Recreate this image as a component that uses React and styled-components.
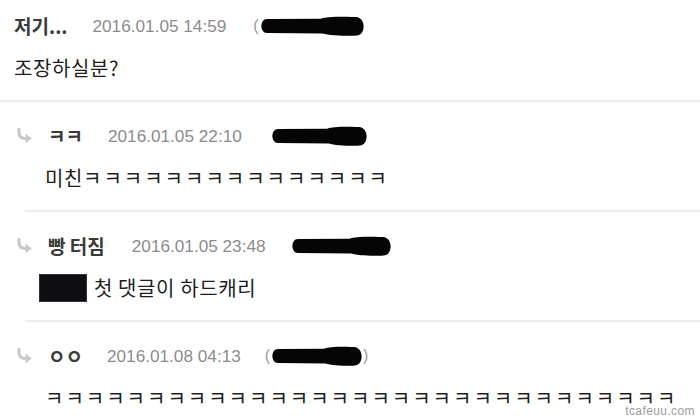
import React from "react";
import styled, { createGlobalStyle } from "styled-components";

const Global = createGlobalStyle`
  html, body { margin: 0; padding: 0; background: #fff; }
  body { width: 700px; height: 419px; overflow: hidden; }
  #root { width: 700px; height: 419px; }
`;

const Page = styled.div`
  position: relative;
  width: 700px;
  height: 419px;
  background: #fff;
  font-family: "Noto Sans CJK KR", "Noto Sans", sans-serif;
  color: #222;
`;

const Block = styled.section`
  display: flex;
  flex-direction: column;
  gap: 18px;
  padding: ${(p) => (p.$reply ? "22px 0 20px" : "14px 0 20px")};
`;

const Divider = styled.hr`
  margin: 0 0 0 ${(p) => p.$indent}px;
  border: 0;
  height: 2px;
  background: #ededed;
`;

const Header = styled.div`
  display: flex;
  align-items: center;
  height: 24px;
  padding-left: ${(p) => (p.$reply ? 16 : 14)}px;
`;

const ReplyIcon = styled.svg`
  width: 17px;
  height: 16px;
  margin-right: 15px;
  flex: none;
`;

const Name = styled.span`
  font-size: 19px;
  font-weight: 700;
  color: #3a3a3a;
  white-space: nowrap;
  position: relative;
  top: -1px;
`;

const DateText = styled.span`
  margin-left: ${(p) => p.$gap}px;
  font-family: "Liberation Sans", Arial, sans-serif;
  font-size: 17.2px;
  color: #8c8c8c;
  white-space: nowrap;
`;

const Redact = styled.span`
  display: inline-flex;
  align-items: center;
  margin-left: ${(p) => p.$gap}px;
  font-family: "Liberation Sans", Arial, sans-serif;
  font-size: 16px;
  color: #9a9a9a;
`;

const Paren = styled.span`
  line-height: 1;
`;

const Content = styled.div`
  display: flex;
  align-items: center;
  gap: 8px;
  height: 24px;
  padding-left: ${(p) => p.$indent}px;
  font-size: 20px;
  line-height: 24px;
  letter-spacing: 0.6px;
  color: #1e1e1e;
  white-space: nowrap;
`;

const Laugh = styled.span`
  letter-spacing: 2px;
`;

const Masked = styled.span`
  display: inline-block;
  width: 46px;
  height: 26px;
  flex: none;
  background: #0e0e10;
  box-shadow: 0 0 0 1px #2b3340;
`;

const Watermark = styled.div`
  position: absolute;
  right: 5px;
  bottom: 1px;
  font-family: "Liberation Sans", Arial, sans-serif;
  font-size: 12px;
  line-height: 14px;
  letter-spacing: 0.4px;
  color: #9c9c9c;
`;

const Arrow = () => (
  <ReplyIcon viewBox="0 0 17 16">
    <path d="M3 1.5 C2.5 8 4.5 10.5 9 10.5 L11 10.5" fill="none" stroke="#cacaca" strokeWidth="3.2" strokeLinecap="round" />
    <path d="M9.5 5.5 L15.8 10.5 L9.5 15.5 Z" fill="#cacaca" />
  </ReplyIcon>
);

const Blob = ({ w, h = 20 }) => (
  <svg width={w} height={h} viewBox={`0 0 ${w} ${h}`} style={{ display: "block" }}>
    <path
      d={`M8 3 C0.5 3 0.5 17 8 17 L${w * 0.6} 17.5 C${w * 0.66} 20 ${w - 10} 20 ${w - 8} 19.5 C${w + 1} 18.5 ${w + 1} 1.5 ${w - 9} 1 C${w * 0.66} 0 ${w * 0.62} 1.5 ${w * 0.58} 2.8 Z`}
      fill="#050505"
    />
  </svg>
);

const Redaction = ({ gap, w, open, close }) => (
  <Redact $gap={gap}>
    {open && <Paren>(</Paren>}
    <Blob w={w} />
    {close && <Paren>)</Paren>}
  </Redact>
);

const comments = [
  {
    reply: false,
    name: "저기...",
    date: "2016.01.05 14:59",
    dateGap: 25,
    red: { gap: 27, w: 106, open: true },
    body: ["조장하실분?", ""],
  },
  {
    reply: true,
    name: "ㅋㅋ",
    date: "2016.01.05 22:10",
    dateGap: 25,
    red: { gap: 28, w: 98 },
    body: ["미친", "ㅋ".repeat(15)],
  },
  {
    reply: true,
    name: "빵 터짐",
    date: "2016.01.05 23:48",
    dateGap: 27,
    red: { gap: 24, w: 102 },
    body: ["첫 댓글이 하드캐리", ""],
    masked: true,
  },
  {
    reply: true,
    name: "ㅇㅇ",
    date: "2016.01.08 04:13",
    dateGap: 24,
    red: { gap: 24, w: 93, open: true, close: true },
    body: ["", "ㅋ".repeat(31)],
  },
];

export default function App() {
  return (
    <Page>
      <Global />
      {comments.map((c, i) => (
        <React.Fragment key={i}>
          {i > 0 && <Divider $indent={i === 1 ? 0 : 25} />}
          <Block $reply={c.reply}>
            <Header $reply={c.reply}>
              {c.reply && <Arrow />}
              <Name>{c.name}</Name>
              <DateText $gap={c.dateGap}>{c.date}</DateText>
              <Redaction {...c.red} />
            </Header>
            <Content $indent={c.masked ? 40 : c.reply ? 45 : 14}>
              {c.masked && <Masked />}
              <span>
                {c.body[0]}
                {c.body[1] && <Laugh>{c.body[1]}</Laugh>}
              </span>
            </Content>
          </Block>
        </React.Fragment>
      ))}
      <Watermark>tcafeuu.com</Watermark>
    </Page>
  );
}
